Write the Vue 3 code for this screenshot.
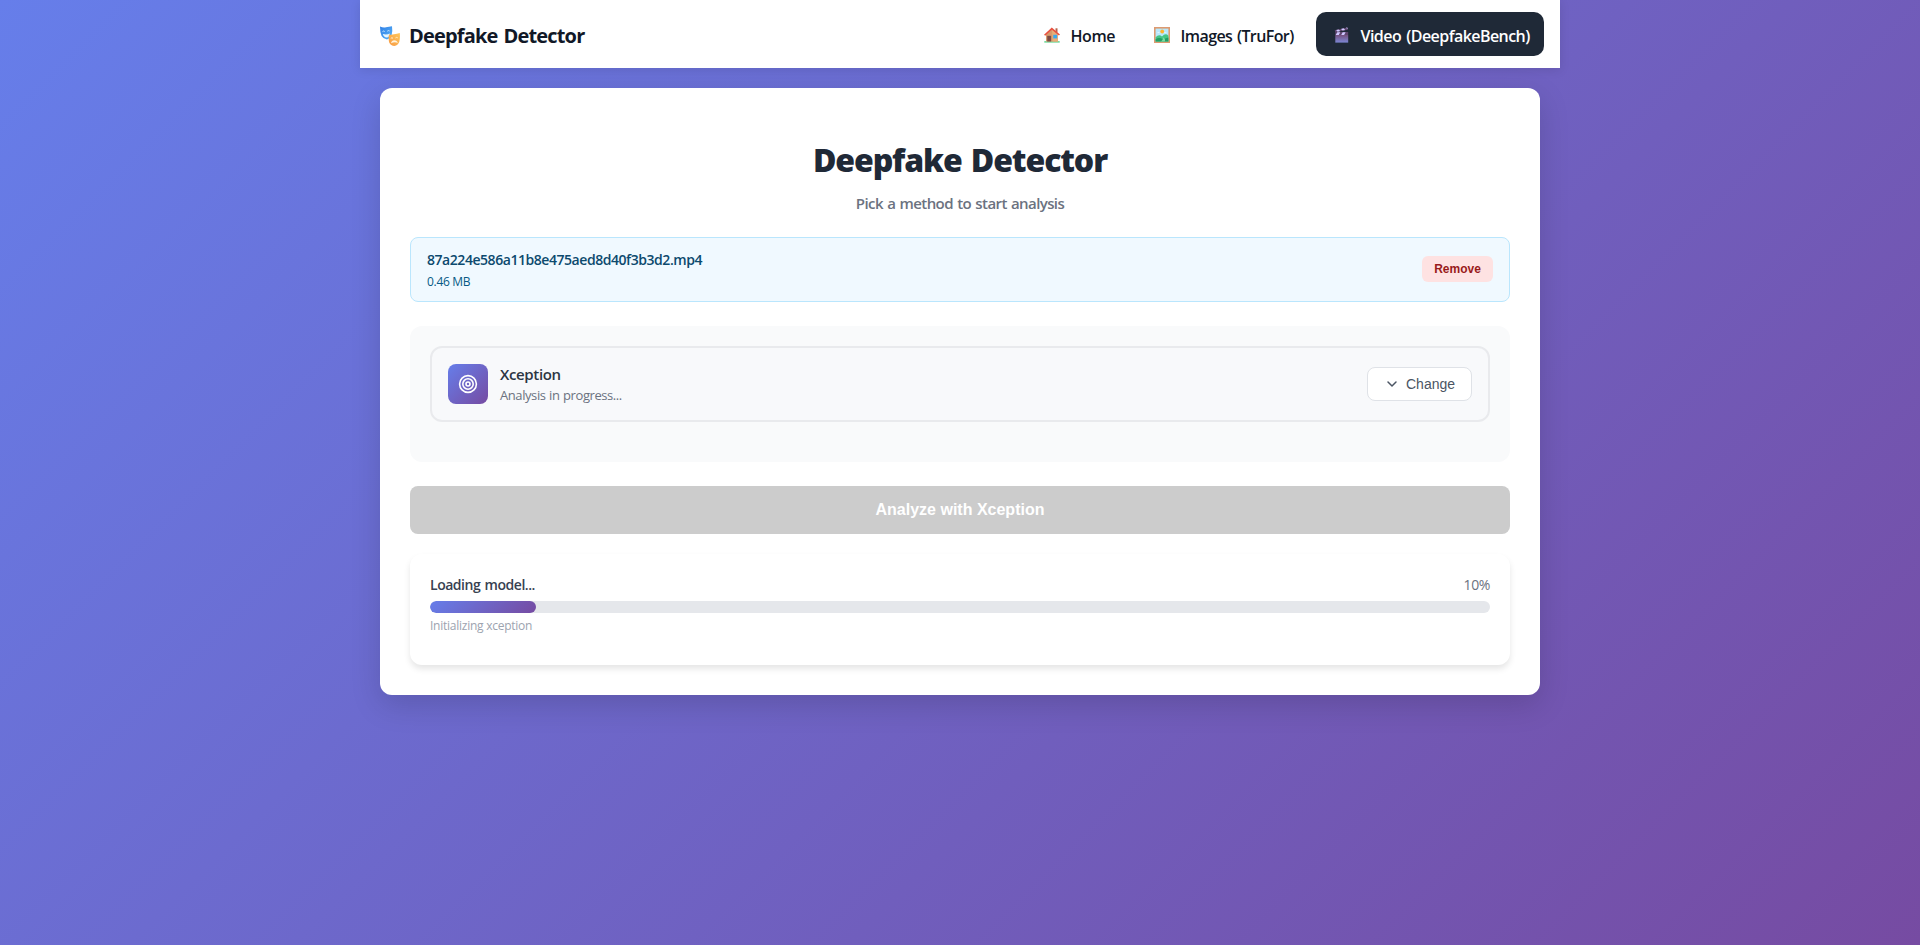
<script setup>
const progress = 10
</script>

<template>
  <div class="page">
    <header class="topbar">
      <div class="brand">
        <svg class="brand-icon" viewBox="0 0 20 20">
          <defs>
            <linearGradient id="maskBlue" x1="0" y1="0" x2="1" y2="1">
              <stop offset="0" stop-color="#2f7fe6" /><stop offset="1" stop-color="#5ab4f8" />
            </linearGradient>
            <linearGradient id="maskGold" x1="1" y1="0" x2="0" y2="1">
              <stop offset="0" stop-color="#ffc75a" /><stop offset="1" stop-color="#f79a45" />
            </linearGradient>
          </defs>
          <path d="M0 .6Q3 1.9 6 1.3Q9 .8 12 .3Q12.8 6 11.6 9.4Q10 12.9 7 13.6Q3.400 13.2 1.600 10Q0 6.500 0 .6Z" fill="url(#maskBlue)" />
          <path d="M2.500 5.600Q3.600 4.500 4.700 5.500M7.300 5.200Q8.400 4.100 9.600 5" fill="none" stroke="#dcefff" stroke-width=".9" />
          <path d="M2.800 8Q6.500 9.200 9.900 7.500Q9.400 11.300 6.700 11.500Q3.700 11.300 2.800 8Z" fill="#e8f6ff" />
          <path d="M9 8.400Q11.500 8.900 14 8.300Q17 7.900 19.800 7Q20.300 12 19.300 15.800Q17.800 19.500 14.500 20Q10.700 19.700 9.200 16.500Q8.300 13.500 9 8.400Z" fill="url(#maskGold)" />
          <path d="M10.800 12.300Q12 11.200 13 12.300M15.500 11.900Q16.600 10.900 17.700 11.800" fill="none" stroke="#fff0c8" stroke-width="1" />
          <path d="M11 17.300Q11.600 14.400 14.300 14.200Q17.100 14.200 17.800 16.900Q14.500 15.500 11 17.300Z" fill="#fff4df" />
        </svg>
        <span>Deepfake Detector</span>
      </div>
      <nav class="nav">
        <a class="nav-item home">
          <svg class="emoji" viewBox="0 0 16 16">
            <path d="M.3 14.300h15.400v1.200H.3z" fill="#3ecb76" />
            <path d="M2 7.500L8 2l6 5.500V14.500H2z" fill="#d79a6c" />
            <path d="M8 2l6 5.500V14.500H8.500z" fill="#e8ad78" />
            <path d="M11.500 1.300h2v4h-2z" fill="#b5644c" />
            <path d="M0 7.800L7.800.6L16 7.600l-1.100 1L7.900 2.800L1.200 8.800z" fill="#e8503f" />
            <path d="M3.200 8.800h3.900v5.700H3.200z" fill="#7c4b45" />
            <path d="M9.200 7.800h3.900v3.600H9.200z" fill="#3ba8ed" />
          </svg>
          <span>Home</span>
        </a>
        <a class="nav-item images">
          <svg class="emoji" viewBox="0 0 16 16">
            <path d="M0 0h16v16H0z" fill="#dd9a70" />
            <path d="M1.600 1.600h12.800v12.800H1.600z" fill="#b9e7fb" />
            <circle cx="8.200" cy="4.500" r="1.900" fill="#ffb52e" />
            <path d="M3 6.100q1.500-1.500 3 0zM9.800 5.800q1.400-1.500 3 0z" fill="#f2fbff" />
            <path d="M1.600 10.200Q5 6.500 8 9.500Q11.500 5.500 14.400 8.800V14.400H1.600z" fill="#45c584" />
            <path d="M1.600 12.200Q5 9.800 9 12.200L14.400 10.600V14.400H1.600z" fill="#239e63" />
            <path d="M7 14.400Q10 12 8.500 10Q12 11.800 10.800 14.400z" fill="#7ddca2" />
          </svg>
          <span>Images (TruFor)</span>
        </a>
        <a class="nav-item video active">
          <svg class="emoji" viewBox="0 0 16 16">
            <defs>
              <linearGradient id="clap" x1="0" y1="0" x2="0" y2="1">
                <stop offset="0" stop-color="#75517f" /><stop offset="1" stop-color="#7d87d5" />
              </linearGradient>
            </defs>
            <path d="M1.300 8h12.900v7.600H1.300z" fill="url(#clap)" />
            <path d="M1.300 5h12.900v3H1.300z" fill="#60466f" />
            <path d="M1.700 7.900l1.600-2.600h2.900L4.800 7.900zM7.200 7.900l1.500-2.600h2.900l-1.500 2.600z" fill="#cfc7ff" />
            <path d="M.7 3.300L13.300.4l.6 2.300L1.300 5.200z" fill="#60466f" />
            <path d="M2.100 3l2.500-.6l1.800 1.700l-2.700.6zM7 1.900l2.500-.6l1.700 1.800l-2.600.5zM11.900.8l1.400-.4l.5 1.800z" fill="#cfc7ff" />
          </svg>
          <span>Video (DeepfakeBench)</span>
        </a>
      </nav>
    </header>

    <main class="card">
      <h1>Deepfake Detector</h1>
      <p class="subtitle">Pick a method to start analysis</p>

      <section class="file">
        <div>
          <div class="file-name">87a224e586a11b8e475aed8d40f3b3d2.mp4</div>
          <div class="file-size">0.46 MB</div>
        </div>
        <button class="remove">Remove</button>
      </section>

      <section class="method-panel">
        <div class="method">
          <div class="method-icon">
            <svg width="20" height="20" viewBox="0 0 20 20" fill="none" stroke="#fff" stroke-width="1.6">
              <circle cx="10" cy="10" r="8.400" /><circle cx="10" cy="10" r="5.200" /><circle cx="10" cy="10" r="2" />
            </svg>
          </div>
          <div class="method-text">
            <div class="method-name">Xception</div>
            <div class="method-status">Analysis in progress...</div>
          </div>
          <button class="change">
            <svg width="16" height="16" viewBox="0 0 16 16" fill="none" stroke="#4b5563" stroke-width="1.500" stroke-linecap="round" stroke-linejoin="round">
              <path d="M4 6l4 4l4-4" />
            </svg>
            <span>Change</span>
          </button>
        </div>
      </section>

      <button class="analyze" disabled>Analyze with Xception</button>

      <section class="progress">
        <div class="progress-head">
          <span class="progress-label">Loading model...</span>
          <span class="progress-value">{{ progress }}%</span>
        </div>
        <div class="track"><div class="fill" :style="{ width: progress + '%' }"></div></div>
        <div class="progress-note">Initializing xception</div>
      </section>
    </main>
  </div>
</template>

<style>
body { margin: 0; }
</style>

<style scoped>
* { box-sizing: border-box; }
.page {
  height: 945px;
  overflow: hidden;
  background: linear-gradient(135deg, #667eea 0%, #764ba2 100%);
  font-family: "Open Sans", "Noto Sans", sans-serif;
}
.topbar {
  width: 1200px;
  height: 68px;
  margin: 0 auto;
  padding: 0 16px 0 20px;
  display: flex;
  align-items: center;
  justify-content: space-between;
  background: #fff;
  box-shadow: 0 2px 10px rgba(0, 0, 0, 0.1);
}
.brand {
  display: flex;
  align-items: center;
  gap: 9px;
  padding-top: 3px;
  font-size: 20px;
  font-weight: 700;
  line-height: 28px;
  letter-spacing: -0.82px;
  word-spacing: 1.5px;
  color: #111827;
  white-space: nowrap;
}
.brand-icon { width: 20px; height: 20px; }
.nav { display: flex; gap: 6px; }
.nav-item {
  height: 44px;
  padding: 3px 0 0 18px;
  display: flex;
  align-items: center;
  gap: 10.5px;
  border-radius: 10px;
  font-size: 16px;
  font-weight: 600;
  line-height: 22px;
  color: #111827;
  white-space: nowrap;
}
.home { width: 104px; letter-spacing: -0.4px; }
.images { width: 174px; letter-spacing: -0.6px; word-spacing: 1.2px; }
.video { width: 228px; letter-spacing: -0.55px; word-spacing: 1.5px; }
.active { background: #1f2937; color: #fff; }
.emoji { width: 16px; height: 16px; margin-top: -1px; flex: none; }

.card {
  width: 1160px;
  height: 607px;
  margin: 20px auto 0;
  padding: 49px 30px 30px;
  background: #fff;
  border-radius: 12px;
  box-shadow: 0 10px 30px rgba(0, 0, 0, 0.15);
}
h1 {
  margin: 0;
  font-size: 32px;
  font-weight: 800;
  line-height: 46px;
  letter-spacing: -1.12px;
  word-spacing: 2px;
  text-align: center;
  color: #1f2937;
}
.subtitle {
  margin: 10px 0 0;
  font-size: 15px;
  font-weight: 600;
  line-height: 20px;
  letter-spacing: -0.6px;
  word-spacing: 1px;
  text-align: center;
  color: #6b7280;
}
.file {
  height: 65px;
  margin-top: 24px;
  padding: 0 16px;
  display: flex;
  align-items: center;
  justify-content: space-between;
  background: #f0f9ff;
  border: 1px solid #bae6fd;
  border-radius: 8px;
}
.file-name {
  font-size: 14px;
  font-weight: 600;
  line-height: 20px;
  letter-spacing: -0.45px;
  color: #0c4a6e;
}
.file-size {
  margin-top: 4px;
  font-size: 12px;
  line-height: 16px;
  letter-spacing: -0.3px;
  color: #075985;
}
button { font-family: "Liberation Sans", Arial, sans-serif; }
.remove {
  width: 71px;
  height: 26px;
  margin-bottom: 2px;
  padding: 0;
  border: 0;
  border-radius: 6px;
  background: #fee2e2;
  color: #991b1b;
  font-size: 12px;
  font-weight: 700;
}
.method-panel {
  height: 136px;
  margin-top: 24px;
  padding: 20px;
  background: #f9fafb;
  border-radius: 12px;
}
.method {
  height: 76px;
  padding: 0 16px;
  display: flex;
  align-items: center;
  background: #f8f9fb;
  border: 2px solid #e9eaed;
  border-radius: 12px;
}
.method-icon {
  width: 40px;
  height: 40px;
  display: flex;
  align-items: center;
  justify-content: center;
  border-radius: 8px;
  background: linear-gradient(135deg, #667eea, #764ba2);
}
.method-text { flex: 1; margin-left: 12px; }
.method-name {
  font-size: 15px;
  font-weight: 600;
  line-height: 20px;
  letter-spacing: -0.36px;
  color: #2b3543;
}
.method-status {
  margin-top: 2px;
  font-size: 13px;
  line-height: 18px;
  letter-spacing: -0.42px;
  word-spacing: 0.6px;
  color: #6b7280;
}
.change {
  width: 105px;
  height: 34px;
  padding: 0 0 0 16px;
  display: flex;
  align-items: center;
  gap: 6px;
  background: #fff;
  border: 1px solid #dfe2e7;
  border-radius: 8px;
  color: #4b5563;
  font-size: 14px;
}
.analyze {
  width: 100%;
  height: 48px;
  margin-top: 24px;
  padding: 0;
  display: block;
  border: 0;
  border-radius: 8px;
  background: #ccc;
  color: #fff;
  font-size: 16px;
  font-weight: 700;
}
.progress {
  height: 111px;
  margin-top: 20px;
  padding: 20px;
  background: #fff;
  border-radius: 12px;
  box-shadow: 0 4px 6px rgba(0, 0, 0, 0.1);
}
.progress-head {
  display: flex;
  justify-content: space-between;
  padding-top: 1px;
  font-size: 14px;
  line-height: 20px;
}
.progress-label { font-weight: 600; letter-spacing: -0.47px; word-spacing: 1.2px; color: #374151; }
.progress-value { letter-spacing: -0.4px; color: #6b7280; }
.track {
  height: 12px;
  margin-top: 6px;
  border-radius: 6px;
  background: #e5e7eb;
  overflow: hidden;
}
.fill {
  height: 100%;
  border-radius: 6px;
  background: linear-gradient(135deg, #667eea, #764ba2);
}
.progress-note {
  margin-top: 5px;
  font-size: 12px;
  line-height: 16px;
  letter-spacing: -0.25px;
  color: #9ca3af;
}
</style>
